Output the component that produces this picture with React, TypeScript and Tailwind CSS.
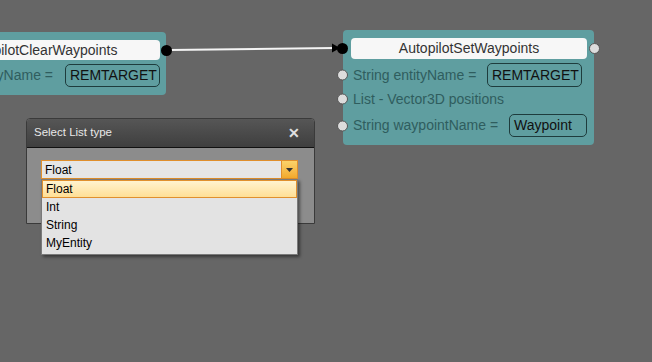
import React from "react";

const font = { fontFamily: '"Liberation Sans", Arial, sans-serif' };

const Pin = ({ dark = false }: { dark?: boolean }) => (
  <span
    className={`absolute -left-[6px] top-1/2 -translate-y-1/2 w-[11px] h-[11px] rounded-full border ${
      dark ? "bg-black border-black" : "bg-[#dcdcdc] border-[#555]"
    }`}
  />
);

const ValueBox = ({ value, className }: { value: string; className: string }) => (
  <div
    className={`ml-auto flex items-center pl-[4px] rounded-[5px] border border-[#1e3c3d] text-[14px] text-[#111] ${className}`}
  >
    {value}
  </div>
);

const App = () => {
  return (
    <div className="relative w-[652px] h-[362px] overflow-hidden bg-[#666666]" style={font}>
      {/* connection */}
      <svg className="absolute inset-0" width={652} height={362}>
        <line x1={170} y1={50} x2={334} y2={48} stroke="#f4f4f4" strokeWidth={2} />
        <polygon points="332,43.5 340,48 332,52.5" fill="#000" />
        <circle cx={166} cy={50.5} r={5} fill="#000" />
      </svg>

      {/* left node (clipped) */}
      <div className="absolute left-[-86px] top-[32px] w-[252px] h-[63px] rounded-[4px] bg-[#5f9ea0] pl-[8px] pr-[6px] pt-[8px]">
        <div className="h-[20px] rounded-[4px] bg-[#f7f7f7] flex items-center justify-center text-[14px] text-[#333]">
          AutopilotClearWaypoints
        </div>
        <div className="flex items-center h-[23px] mt-[4px] pl-[2px]">
          <span className="text-[14px] text-[#2f5d5e] ml-auto">String entityName =</span>
          <ValueBox value="REMTARGET" className="w-[95px] h-[23px] !ml-[12px]" />
        </div>
        <span className="absolute -right-[6px] top-[13px] w-[11px] h-[11px] rounded-full bg-black" />
      </div>

      {/* right node */}
      <div className="absolute left-[343px] top-[30px] w-[251px] h-[115px] rounded-[4px] bg-[#5f9ea0] pl-[8px] pr-[7px] pt-[8px]">
        <div className="h-[21px] rounded-[4px] bg-[#f7f7f7] flex items-center justify-center text-[14px] text-[#333]">
          AutopilotSetWaypoints
        </div>
        <span className="absolute -left-[6px] top-[13px] w-[11px] h-[11px] rounded-full bg-black" />
        <span className="absolute -right-[6px] top-[13px] w-[11px] h-[11px] rounded-full bg-[#dcdcdc] border border-[#555]" />

        <div className="relative flex items-center h-[24px] mt-[4px] -ml-[8px] pl-[10px] pr-[5px]">
          <Pin />
          <span className="text-[14px] text-[#2f5d5e]">String entityName =</span>
          <ValueBox value="REMTARGET" className="w-[95px] h-[24px]" />
        </div>
        <div className="relative flex items-center h-[24px] -ml-[8px] pl-[10px]">
          <Pin />
          <span className="text-[14px] text-[#2f5d5e]">List - Vector3D positions</span>
        </div>
        <div className="relative flex items-center h-[23px] mt-[3px] -ml-[8px] pl-[10px]">
          <Pin />
          <span className="text-[14px] text-[#2f5d5e]">String waypointName =</span>
          <ValueBox value="Waypoint" className="w-[78px] h-[23px]" />
        </div>
      </div>

      {/* dialog */}
      <div className="absolute left-[26px] top-[118px] w-[289px] h-[106px] rounded-t-[4px] border border-[#3a3a3a] bg-[#8c8c8c] flex flex-col">
        <div className="h-[29px] flex items-center justify-between pl-[7px] pr-[14px] rounded-t-[3px] bg-gradient-to-b from-[#565656] to-[#3f3f3f] border-b border-[#111]">
          <span className="text-[11.5px] text-[#e8e8e8]">Select List type</span>
          <span className="text-[14px] font-bold text-[#e0e0e0] leading-none">✕</span>
        </div>
      </div>

      {/* combobox */}
      <div className="absolute left-[41px] top-[160px] w-[257px]">
        <div className="h-[19px] flex border border-[#e08f2c] bg-[#e6e6e6]">
          <span className="flex-1 flex items-center pl-[3px] text-[12px] text-black">Float</span>
          <span className="w-[16px] flex items-center justify-center border-l border-[#e08f2c] bg-gradient-to-b from-[#fbd36a] to-[#f2a92a]">
            <svg width="7" height="4" viewBox="0 0 7 4">
              <polygon points="0,0 7,0 3.5,4" fill="#333" />
            </svg>
          </span>
        </div>
        <div className="border border-[#7a7a7a] bg-[#e3e3e3] pb-[2px] shadow-[2px_2px_3px_rgba(0,0,0,0.45)]">
          <div className="h-[18px] flex items-center pl-[3px] text-[12px] text-black border border-[#e0902e] bg-gradient-to-b from-[#fff3cf] to-[#ffdf95]">
            Float
          </div>
          {["Int", "String", "MyEntity"].map((t) => (
            <div key={t} className="h-[18px] flex items-center pl-[4px] text-[12px] text-black">
              {t}
            </div>
          ))}
        </div>
      </div>
    </div>
  );
};

export default App;
